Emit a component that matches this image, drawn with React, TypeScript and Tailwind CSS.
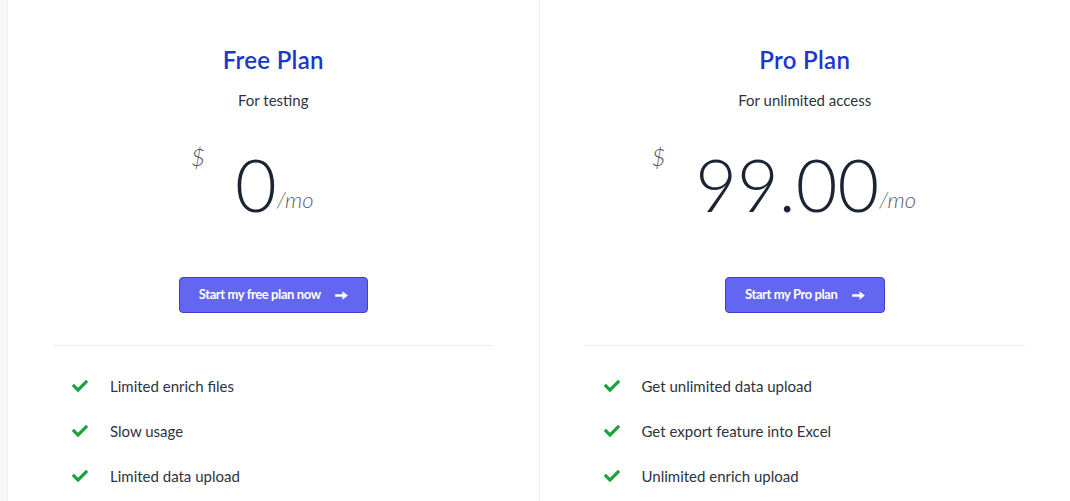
import { FaCheck } from "react-icons/fa";

type Plan = {
  name: string;
  tagline: string;
  price: string;
  cta: string;
  features: string[];
};

const plans: Plan[] = [
  {
    name: "Free Plan",
    tagline: "For testing",
    price: "0",
    cta: "Start my free plan now",
    features: ["Limited enrich files", "Slow usage", "Limited data upload"],
  },
  {
    name: "Pro Plan",
    tagline: "For unlimited access",
    price: "99.00",
    cta: "Start my Pro plan",
    features: ["Get unlimited data upload", "Get export feature into Excel", "Unlimited enrich upload"],
  },
];

function Arrow() {
  return (
    <svg width="13" height="9" viewBox="0 0 13 9" fill="currentColor">
      <rect x="0" y="3.2" width="8" height="2.6" rx="0.6" />
      <path d="M7.5 0.3 L12.8 4.5 L7.5 8.7 Z" />
    </svg>
  );
}

function PlanCard({ plan, first }: { plan: Plan; first?: boolean }) {
  return (
    <div
      className={`flex-1 bg-white px-[45px] pt-[44px] flex flex-col items-center ${
        first ? "border-l border-r border-[#eef0f3]" : ""
      }`}
    >
      <h2 className="text-[24px] leading-8 font-semibold text-[#1c37cc] tracking-[0.3px]">{plan.name}</h2>
      <p className="mt-3 text-[15px] leading-6 text-[#2d3340]">{plan.tagline}</p>

      <div className="mt-[36px] flex items-baseline pr-[42px]">
        <span className="self-start -mt-[3px] mr-[30px] text-[24px] leading-none font-light italic text-[#4f5560]">$</span>
        <span className="text-[72px] leading-none font-light text-[#1c2333]">{plan.price}</span>
        <span className="-translate-y-1 text-[22px] leading-none font-light italic text-[#5a606b]">/mo</span>
      </div>

      <button className="mt-[57px] h-9 px-[19px] flex items-center gap-[14px] rounded-[4px] bg-[#6366f1] border border-[#3f3fc8] text-white text-[13px] font-bold tracking-[-0.4px]">
        {plan.cta}
        <Arrow />
      </button>

      <div className="mt-8 h-px w-full bg-[#eceef1]" />

      <ul className="mt-7 w-full pl-[19px] flex flex-col gap-[21px]">
        {plan.features.map((f) => (
          <li key={f} className="h-6 flex items-center gap-[22px] text-[15px] text-[#2d3340]">
            <FaCheck className="w-4 h-4 text-[#1aa33c] shrink-0" />
            {f}
          </li>
        ))}
      </ul>
    </div>
  );
}

export default function App() {
  return (
    <div
      className="w-[1070px] h-[501px] overflow-hidden bg-[#f6f8fa] pl-[7px] flex"
      style={{ fontFamily: "Lato, 'Noto Sans', sans-serif" }}
    >
      <PlanCard plan={plans[0]} first />
      <PlanCard plan={plans[1]} />
    </div>
  );
}
